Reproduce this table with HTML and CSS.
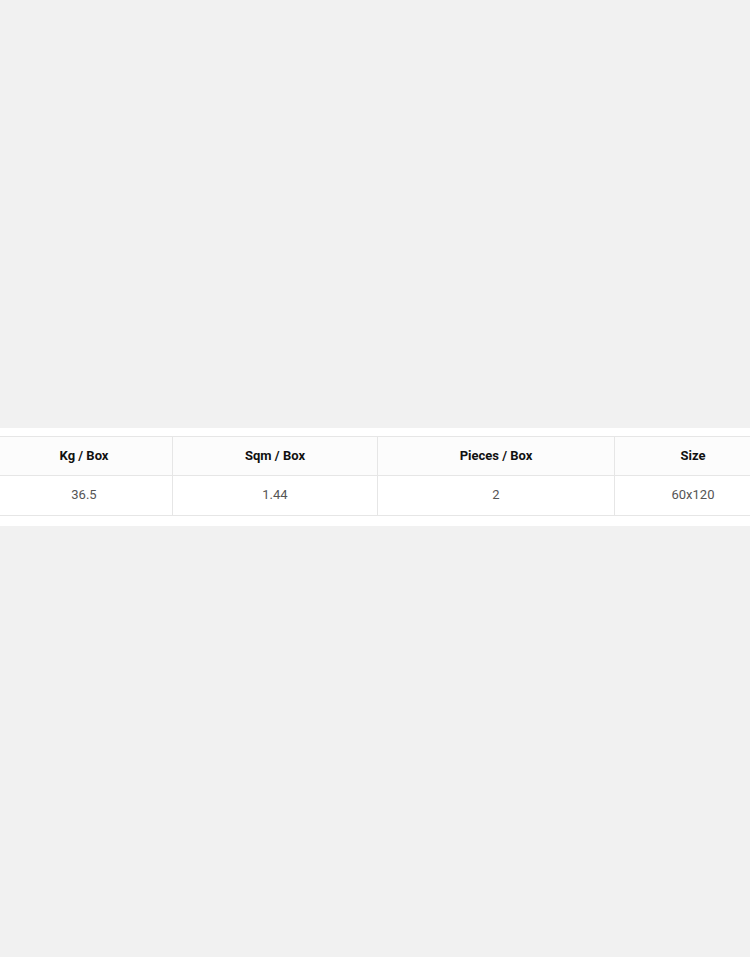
FILE: index.html
```html
<!DOCTYPE html>
<html>
<head>
<meta charset="utf-8">
<link rel="stylesheet" href="styles.css">
</head>
<body>
<div class="page">
  <section class="specs">
    <table class="spec-table">
      <colgroup>
        <col class="c1"><col class="c2"><col class="c3"><col class="c4">
      </colgroup>
      <thead>
        <tr><th>Kg / Box</th><th>Sqm / Box</th><th>Pieces / Box</th><th>Size</th></tr>
      </thead>
      <tbody>
        <tr><td>36.5</td><td>1.44</td><td>2</td><td>60x120</td></tr>
      </tbody>
    </table>
  </section>
</div>
</body>
</html>
```
FILE: styles.css
```css
html, body {
  margin: 0;
  padding: 0;
  background: #f1f1f1;
  overflow: hidden;
}
.page {
  width: 750px;
  height: 957px;
  padding-top: 428px;
  box-sizing: border-box;
  overflow: hidden;
}
.specs {
  background: #ffffff;
  padding: 8px 0 10px;
  overflow: hidden;
}
.spec-table {
  border-collapse: collapse;
  table-layout: fixed;
  width: 776px;
  margin-left: -5px;
  font-family: Roboto, "Liberation Sans", sans-serif;
  font-size: 13px;
}
.c1 { width: 177px; }
.c2 { width: 205px; }
.c3 { width: 237px; }
.c4 { width: 157px; }
.spec-table th,
.spec-table td {
  border: 1px solid #e6e6e6;
  padding: 0 8px 2px;
  text-align: center;
  box-sizing: border-box;
}
.spec-table th {
  height: 39px;
  background: #fcfcfc;
  color: #111;
  font-weight: 700;
}
.spec-table td {
  height: 40px;
  color: #555;
  font-weight: 400;
}
```
